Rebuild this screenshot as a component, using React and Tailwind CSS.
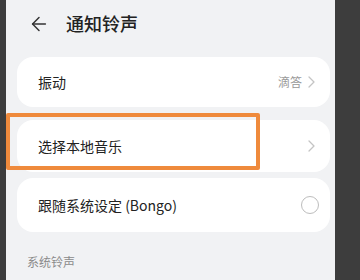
import { ArrowLeft } from "lucide-react";

const Chevron = ({ className = "" }) => (
  <svg width="7" height="12" viewBox="0 0 7 12" className={className}>
    <path d="M1 1l5 5-5 5" fill="none" stroke="currentColor" strokeWidth="1.3" strokeLinecap="round" strokeLinejoin="round" />
  </svg>
);

const Card = ({ className = "", children }) => (
  <div className={`ml-[11px] mr-[5px] flex items-center justify-between rounded-[16px] bg-white pl-[21px] ${className}`}>
    {children}
  </div>
);

export default function App() {
  return (
    <div
      className="flex h-[280px] w-[360px] overflow-hidden"
      style={{ fontFamily: '"Noto Sans CJK SC", "Noto Sans", sans-serif' }}
    >
      <div className="w-[6px] shrink-0 bg-[#3d3d3d]" />
      <div className="relative flex-1 bg-[#f1f2f4]">
        <div className="flex h-[47px] items-center pl-[22px]">
          <ArrowLeft size={22} strokeWidth={1.6} className="text-[#333]" />
          <span className="ml-[16px] text-[18px] font-medium text-[#222]">通知铃声</span>
        </div>

        <Card className="mt-[10px] h-[50px] pr-[15px]">
          <span className="text-[14px] text-[#222]">振动</span>
          <div className="flex items-center gap-[6px]">
            <span className="text-[12px] text-[#999]">滴答</span>
            <Chevron className="text-[#c4c4c4]" />
          </div>
        </Card>

        <Card className="mt-[13px] h-[52px] pr-[15px]">
          <span className="text-[14px] text-[#222]">选择本地音乐</span>
          <Chevron className="text-[#c4c4c4]" />
        </Card>

        <Card className="mt-[6px] h-[54px] pr-[11px]">
          <span className="text-[14px] text-[#222]">跟随系统设定 (Bongo)</span>
          <div className="h-[18px] w-[18px] rounded-full border-[1.5px] border-[#bdbdbd]" />
        </Card>

        <div className="mt-[21px] pl-[21px] text-[12px] text-[#8a8a8a]">系统铃声</div>

        <div className="pointer-events-none absolute left-0 top-[113px] h-[57px] w-[254px] rounded-[2px] border-[4px] border-[#ef8a3c]" />
      </div>
      <div className="w-[25px] shrink-0 bg-[#3d3d3d]" />
    </div>
  );
}
